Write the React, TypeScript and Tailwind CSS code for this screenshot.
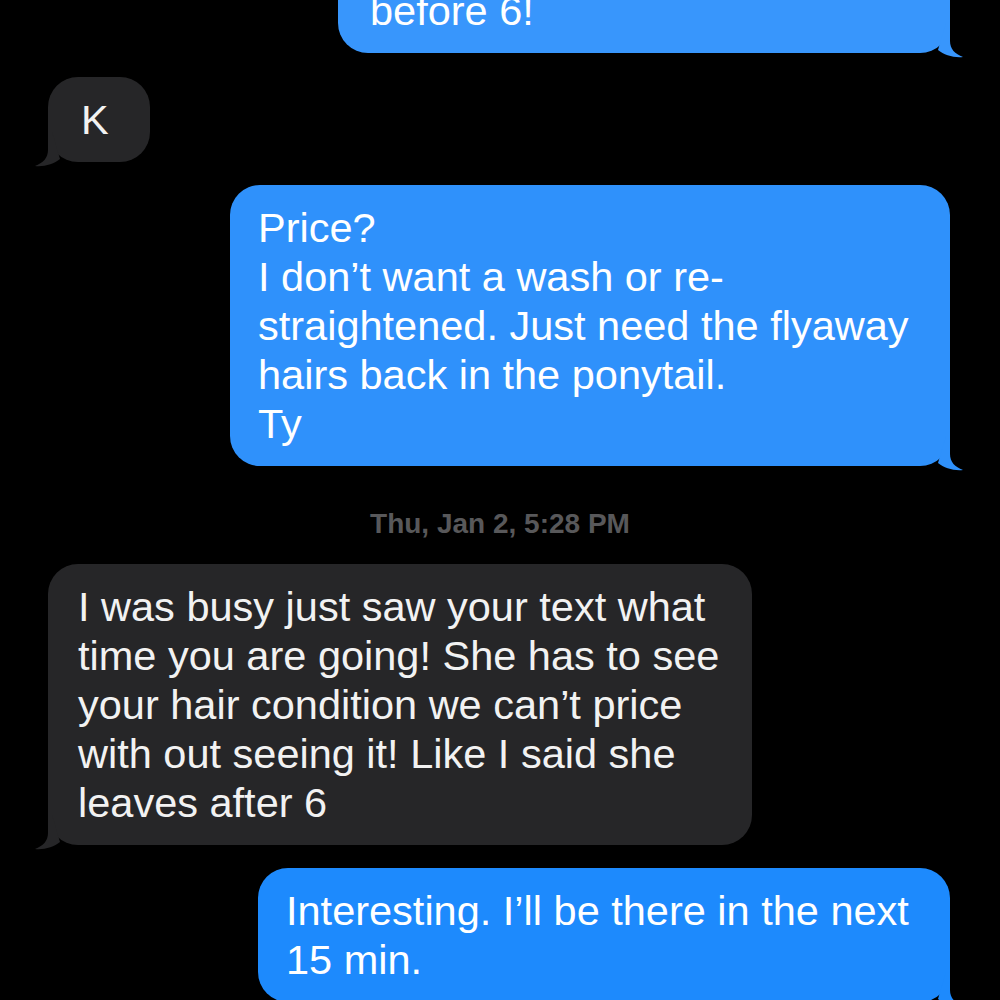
import React from 'react';

type Side = 'me' | 'them';

// little curled tail at the bottom corner of a bubble
function Tail({ side, color }: { side: Side; color: string }) {
  return (
    <svg
      width="60"
      height="50"
      viewBox="-40 -40 60 50"
      className={
        side === 'me'
          ? 'absolute right-[-20px] bottom-[-10px]'
          : 'absolute left-[-20px] bottom-[-10px] -scale-x-100'
      }
    >
      <path
        d="M -4 -30 L 0 -30 L 0 -12 C 0 -4 5 1 13 4 C 4 5 -6 2 -12 -3 L -4 -30 Z"
        fill={color}
      />
    </svg>
  );
}

function Bubble({
  side,
  color,
  width,
  lines,
  className = '',
  textClass = 'text-white',
}: {
  side: Side;
  color: string;
  width: string;
  lines: string[];
  className?: string;
  textClass?: string;
}) {
  return (
    <div
      className={`relative rounded-[30px] py-[18px] ${width} ${
        side === 'me' ? 'self-end mr-[50px]' : 'self-start ml-[48px]'
      } ${className}`}
      style={{ backgroundColor: color }}
    >
      {lines.map((l, i) => (
        <div key={i} className={`whitespace-nowrap text-[41.5px] leading-[49px] ${textClass}`}>
          {l}
        </div>
      ))}
      <Tail side={side} color={color} />
    </div>
  );
}

export default function App() {
  return (
    <div
      className="w-[1000px] h-[1000px] overflow-hidden bg-black flex flex-col"
      style={{ fontFamily: '"Liberation Sans", Arial, sans-serif' }}
    >
      <Bubble
        side="me"
        color="#3896fc"
        width="w-[612px] px-[32px]"
        className="mt-[-32px]"
        lines={['before 6!']}
      />

      <Bubble
        side="them"
        color="#262628"
        width="w-[102px] pl-[33px]"
        className="mt-[24px]"
        textClass="text-[#f2f2f2]"
        lines={['K']}
      />

      <Bubble
        side="me"
        color="#2f91fb"
        width="w-[720px] px-[28px]"
        className="mt-[23px]"
        lines={[
          'Price?',
          'I don\u2019t want a wash or re-',
          'straightened. Just need the flyaway',
          'hairs back in the ponytail.',
          'Ty',
        ]}
      />

      <div className="pt-[38px] pb-[20px] text-center text-[28px] leading-[40px] font-semibold text-[#58585a]">
        Thu, Jan 2, 5:28 PM
      </div>

      <Bubble
        side="them"
        color="#262628"
        width="w-[704px] px-[30px]"
        textClass="text-[#f2f2f2]"
        lines={[
          'I was busy just saw your text what',
          'time you are going! She has to see',
          'your hair condition we can\u2019t price',
          'with out seeing it! Like I said she',
          'leaves after 6',
        ]}
      />

      <Bubble
        side="me"
        color="#1d8afd"
        width="w-[692px] px-[28px]"
        className="mt-[23px] shrink-0"
        lines={['Interesting. I\u2019ll be there in the next', '15 min.']}
      />
    </div>
  );
}
